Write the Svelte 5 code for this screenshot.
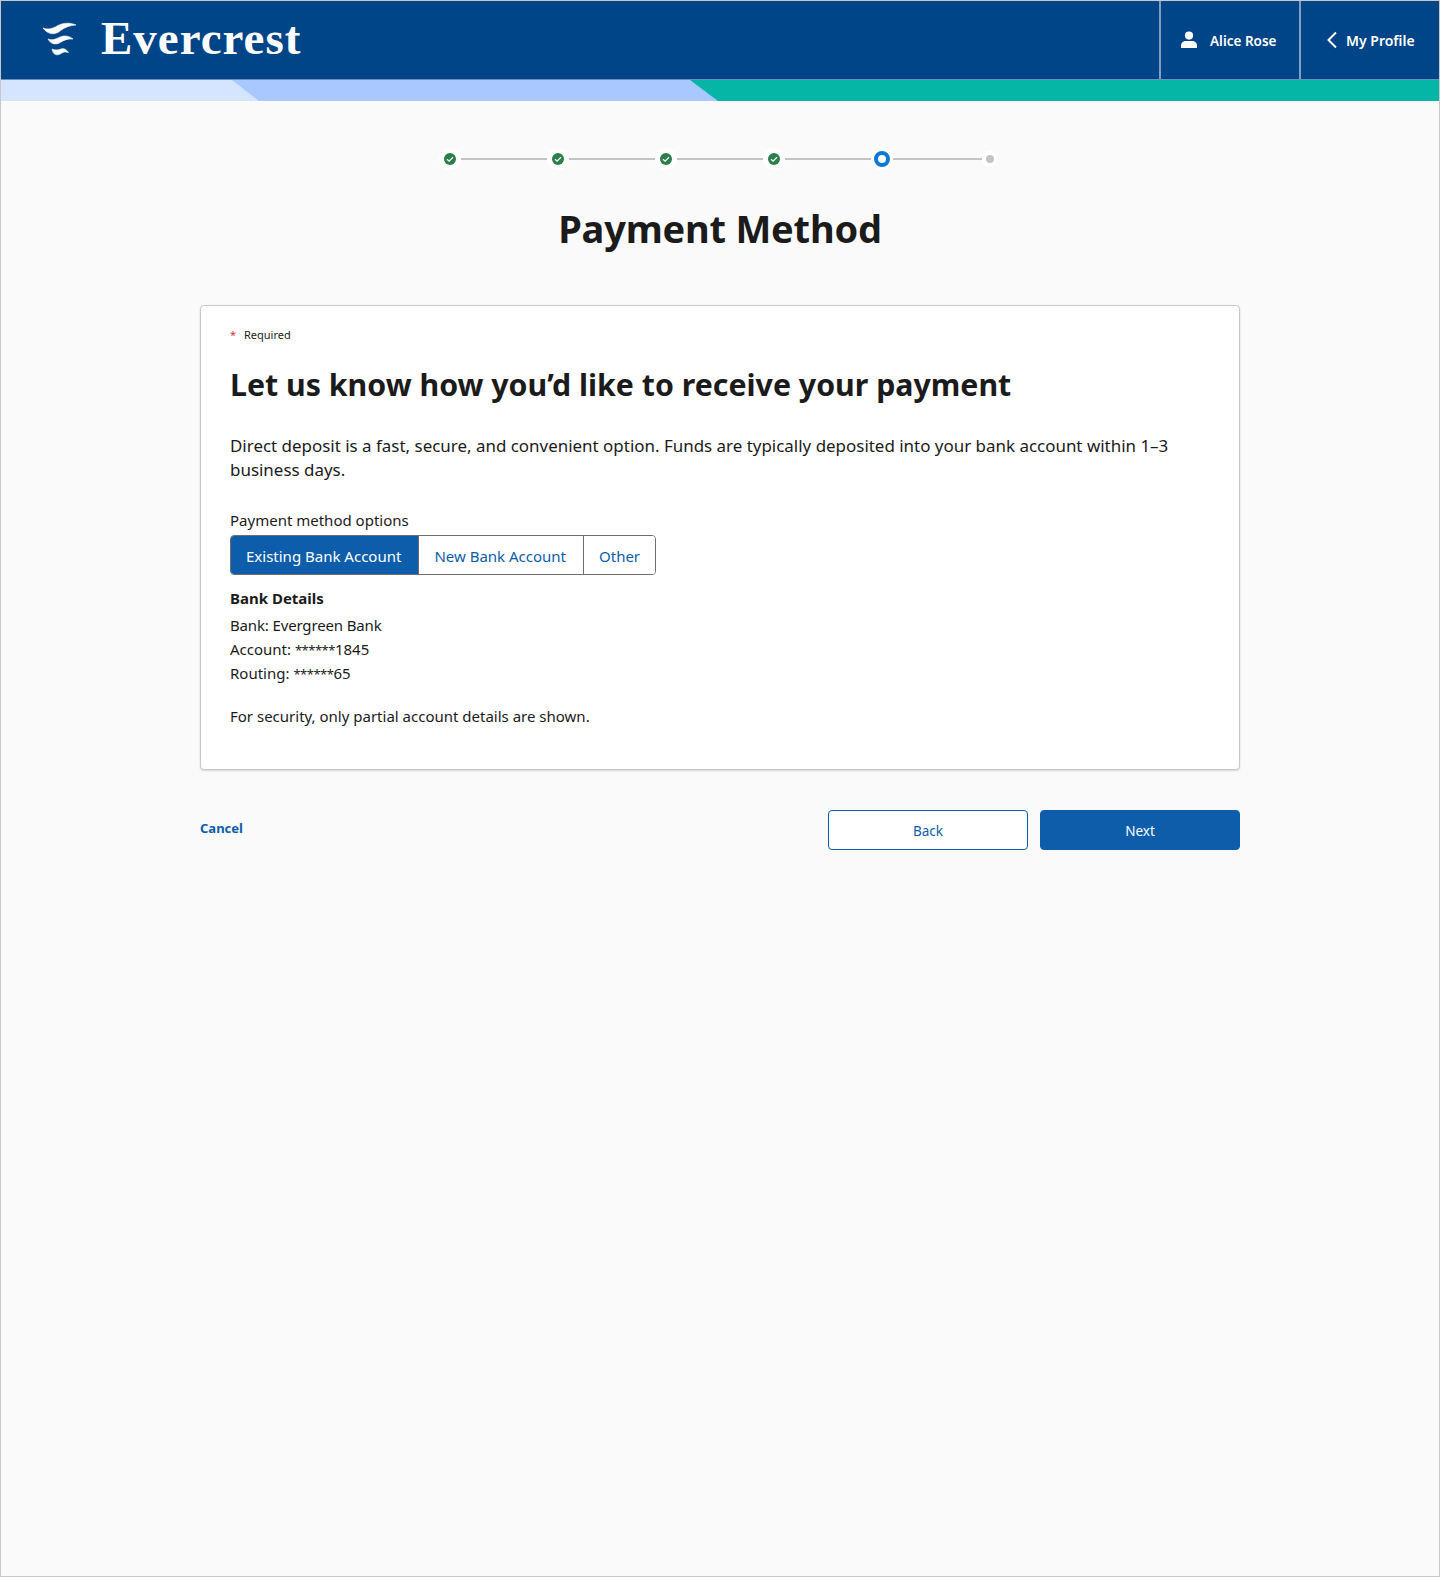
<script>
  const steps = ['done', 'done', 'done', 'done', 'current', 'todo'];
</script>

<div class="page">
  <header class="top">
    <div class="brand">
      <svg class="mark" width="36" height="36" viewBox="0 0 36 36" aria-hidden="true">
        <path d="M1 6C6 8 11 6.500 15 4C20 1 27 0 34 3C28 3.500 23 5 18 9C13 13 6 13 1 6Z" fill="#fff" stroke="#fff" stroke-width="0.600"/>
        <path d="M6 17C10 18.500 13 17.500 17 15.500C21 13.500 26 13 31 17C26 16.500 22 18 19 20C15 23 9 23 6 17Z" fill="#fff" stroke="#fff" stroke-width="0.600"/>
        <path d="M10 27C13 28.500 16 28 19 27C22 26 24 27 26.500 30.500C23 29.500 21 30 19 31.500C15 34 11 33 10 27Z" fill="#fff" stroke="#fff" stroke-width="0.600"/>
      </svg>
      <span class="word">Evercrest</span>
    </div>
    <div class="nav">
      <div class="nav-item user">
        <svg width="18" height="18" viewBox="0 0 18 18" aria-hidden="true">
          <circle cx="9" cy="4.600" r="4.100" fill="#fff"/>
          <path d="M1 17v-2.500C1 11.800 3.200 10 6 10h6c2.800 0 5 1.800 5 4.500V17z" fill="#fff"/>
        </svg>
        <span>Alice Rose</span>
      </div>
      <div class="nav-item back">
        <svg width="12" height="18" viewBox="0 0 12 18" aria-hidden="true">
          <path d="M10 1.500 2.500 9l7.500 7.500" fill="none" stroke="#fff" stroke-width="2"/>
        </svg>
        <span>My Profile</span>
      </div>
    </div>
  </header>
  <div class="ribbon">
    <svg width="1438" height="21" viewBox="0 0 1438 21" preserveAspectRatio="none" aria-hidden="true">
      <rect width="1438" height="21" fill="#05b5a5"/>
      <polygon points="0,0 689,0 717,21 0,21" fill="#a8c8ff"/>
      <polygon points="0,0 231,0 258,21 0,21" fill="#d6e5ff"/>
    </svg>
  </div>

  <main class="main">
    <ol class="stepper">
      {#each steps as s, i}
        {#if i > 0}<li class="line" class:long={i === 5} aria-hidden="true"></li>{/if}
        <li class="step" class:last={s === 'todo'}>
          {#if s === 'done'}
            <svg width="22" height="22" viewBox="0 0 22 22">
              <circle cx="11" cy="11" r="11" fill="#fff"/>
              <circle cx="11" cy="11" r="6" fill="#2a7f4a"/>
              <path d="M8 11.200l2.100 2 3.900-3.900" fill="none" stroke="#fff" stroke-width="1.300"/>
            </svg>
          {:else if s === 'current'}
            <svg width="22" height="22" viewBox="0 0 22 22">
              <circle cx="11" cy="11" r="11" fill="#fff"/>
              <circle cx="11" cy="11" r="6" fill="#fff" stroke="#0a78d6" stroke-width="4"/>
            </svg>
          {:else}
            <svg width="16" height="16" viewBox="0 0 16 16">
              <circle cx="8" cy="8" r="8" fill="#fff"/>
              <circle cx="8" cy="8" r="4" fill="#c4c4c4"/>
            </svg>
          {/if}
        </li>
      {/each}
    </ol>

    <h1>Payment Method</h1>

    <section class="card">
      <p class="req"><span class="star">*</span><span>Required</span></p>
      <h2>Let us know how you’d like to receive your payment</h2>
      <p class="intro">Direct deposit is a fast, secure, and convenient option. Funds are typically deposited into your bank account within 1–3 business days.</p>
      <div class="label">Payment method options</div>
      <div class="seg">
        <button class="on">Existing Bank Account</button>
        <button>New Bank Account</button>
        <button>Other</button>
      </div>
      <div class="detail-title">Bank Details</div>
      <div class="details">
        <div class="tight">Bank: Evergreen Bank</div>
        <div>Account: <span class="mask">******</span>1845</div>
        <div>Routing: <span class="mask">******</span>65</div>
      </div>
      <p class="note">For security, only partial account details are shown.</p>
    </section>

    <div class="actions">
      <a class="cancel" href="#cancel">Cancel</a>
      <div class="btns">
        <button class="btn ghost">Back</button>
        <button class="btn solid">Next</button>
      </div>
    </div>
  </main>
</div>

<style>
  :global(body) {
    margin: 0;
    background: #fafafa;
  }
  .page {
    box-sizing: border-box;
    min-height: 1577px;
    border: 1px solid #c8c8c8;
    background: #fafafa;
    font-family: "Noto Sans", "Open Sans", sans-serif;
    color: #1b1b1b;
  }
  .top {
    box-sizing: border-box;
    height: 79px;
    background: #004587;
    display: flex;
    justify-content: space-between;
    border-bottom: 1px solid #6d90bb;
  }
  .brand {
    display: flex;
    align-items: center;
    padding-left: 41px;
    gap: 23px;
  }
  .mark {
    display: block;
  }
  .word {
    font-family: "Liberation Serif", serif;
    font-weight: 700;
    font-size: 47px;
    letter-spacing: 1px;
    color: #fff;
    line-height: 1;
    margin-bottom: 3px;
  }
  .nav {
    display: flex;
  }
  .nav-item {
    display: flex;
    align-items: center;
    box-sizing: border-box;
    color: #fff;
    font-size: 14px;
    font-weight: 600;
    border-left: 2px solid #7f9fc4;
  }
  .user {
    width: 140px;
    padding-left: 19px;
    gap: 12px;
    font-size: 13.5px;
  }
  .user span {
    padding-top: 2px;
  }
  .back {
    width: 140px;
    padding-left: 25px;
    gap: 8px;
  }
  .ribbon {
    height: 21px;
  }
  .ribbon svg {
    display: block;
  }
  .main {
    width: 1040px;
    margin: 0 auto;
  }
  .stepper {
    list-style: none;
    margin: 0 0 0 239px;
    padding: 47px 0 0;
    display: flex;
    align-items: center;
  }
  .step {
    width: 22px;
    height: 22px;
    flex: none;
  }
  .step.last {
    width: 16px;
    height: 16px;
  }
  .step svg {
    display: block;
  }
  .line {
    flex: none;
    width: 86px;
    height: 2px;
    background: #c4c4c4;
  }
  .line.long {
    width: 89px;
  }
  h1 {
    margin: 30px 0 0;
    text-align: center;
    font-size: 38px;
    line-height: 56px;
    font-weight: 700;
    letter-spacing: -0.2px;
    color: #1b1b1b;
  }
  .card {
    box-sizing: border-box;
    margin-top: 49px;
    height: 465px;
    background: #fff;
    border: 1px solid #c8c8c8;
    border-radius: 4px;
    box-shadow: 0 1px 2px rgba(0, 0, 0, 0.15);
    padding: 21px 29px 0;
  }
  .req {
    margin: 0;
    display: flex;
    gap: 9px;
    font-size: 11px;
    line-height: 16px;
  }
  .star {
    color: #d13438;
    width: 5px;
  }
  h2 {
    margin: 20px 0 0;
    font-size: 30.3px;
    line-height: 44px;
    font-weight: 700;
  }
  .intro {
    margin: 27px 0 0;
    font-size: 16.95px;
    line-height: 24px;
  }
  .label {
    margin-top: 26px;
    font-size: 15px;
    line-height: 24px;
  }
  .seg {
    margin-top: 3px;
    display: inline-flex;
    height: 40px;
    box-sizing: border-box;
    border: 1px solid #6e6e6e;
    border-radius: 4px;
    overflow: hidden;
    vertical-align: top;
  }
  .seg button {
    font: inherit;
    font-size: 15px;
    border: 0;
    background: #fff;
    color: #0d5dab;
    padding: 2px 17px 0 15px;
    border-left: 1px solid #6e6e6e;
  }
  .seg button:first-child {
    border-left: 0;
  }
  .seg button:last-child {
    padding-right: 15px;
  }
  .seg button.on {
    background: #0d5dab;
    color: #fff;
  }
  .detail-title {
    margin-top: 11px;
    font-size: 15px;
    line-height: 24px;
    font-weight: 700;
  }
  .details {
    margin-top: 3px;
    font-size: 15px;
    line-height: 24px;
  }
  .tight {
    letter-spacing: -0.15px;
  }
  .mask {
    font-size: 13px;
    letter-spacing: -0.5px;
    line-height: 1;
  }
  .note {
    margin: 19px 0 0;
    font-size: 15px;
    line-height: 24px;
  }
  .actions {
    margin-top: 40px;
    display: flex;
    justify-content: space-between;
    align-items: flex-start;
  }
  .cancel {
    color: #0d5dab;
    font-size: 13px;
    font-weight: 700;
    text-decoration: none;
    line-height: 20px;
    margin-top: 8px;
  }
  .btns {
    display: flex;
    gap: 12px;
  }
  .btn {
    width: 200px;
    height: 40px;
    font: inherit;
    font-size: 13.5px;
    border-radius: 4px;
    box-sizing: border-box;
    padding: 2px 0 0;
  }
  .ghost {
    background: #fff;
    color: #0d5dab;
    border: 1px solid #0d5dab;
  }
  .solid {
    background: #0d5dab;
    color: #fff;
    border: 1px solid #0d5dab;
  }
</style>
